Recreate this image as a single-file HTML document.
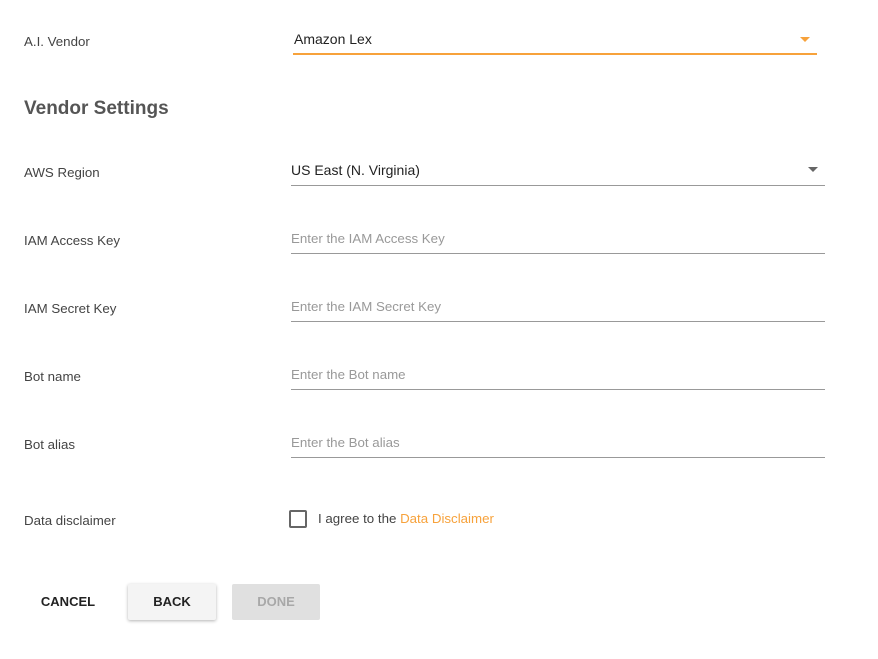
<!DOCTYPE html>
<html><head><meta charset="utf-8"><style>
body{margin:0;width:878px;height:659px;background:#fff;font-family:"Liberation Sans",sans-serif;position:relative;overflow:hidden}
.a{position:absolute;white-space:nowrap}
.lbl{font-size:13.3px;color:#444;line-height:16px}
.val{font-size:14px;color:#222;line-height:16px}
.ph{font-size:13.3px;color:#999;line-height:16px}
.ln{position:absolute;height:1px;background:#999}
.btn{position:absolute;height:36px;line-height:36px;text-align:center;font-size:13px;font-weight:bold;border-radius:2px}
</style></head><body>
<div class="a lbl" style="left:24px;top:34px">A.I. Vendor</div>
<div class="a val" style="left:294px;top:31px">Amazon Lex</div>
<div class="a" style="left:800px;top:37px;width:0;height:0;border-left:5px solid transparent;border-right:5px solid transparent;border-top:5px solid #f7a23b"></div>
<div class="ln" style="left:293px;top:53px;width:524px;height:2px;background:#f7a23b"></div>

<div class="a" style="left:24px;top:98px;font-size:19px;font-weight:bold;color:#555;line-height:22px">Vendor Settings</div>

<div class="a lbl" style="left:24px;top:165px">AWS Region</div>
<div class="a val" style="left:291px;top:162px">US East (N. Virginia)</div>
<div class="a" style="left:808px;top:167px;width:0;height:0;border-left:5px solid transparent;border-right:5px solid transparent;border-top:5px solid #666"></div>
<div class="ln" style="left:291px;top:185px;width:534px"></div>

<div class="a lbl" style="left:24px;top:233px">IAM Access Key</div>
<div class="a ph" style="left:291px;top:231px">Enter the IAM Access Key</div>
<div class="ln" style="left:291px;top:253px;width:534px"></div>

<div class="a lbl" style="left:24px;top:301px">IAM Secret Key</div>
<div class="a ph" style="left:291px;top:299px">Enter the IAM Secret Key</div>
<div class="ln" style="left:291px;top:321px;width:534px"></div>

<div class="a lbl" style="left:24px;top:369px">Bot name</div>
<div class="a ph" style="left:291px;top:367px">Enter the Bot name</div>
<div class="ln" style="left:291px;top:389px;width:534px"></div>

<div class="a lbl" style="left:24px;top:437px">Bot alias</div>
<div class="a ph" style="left:291px;top:435px">Enter the Bot alias</div>
<div class="ln" style="left:291px;top:457px;width:534px"></div>

<div class="a lbl" style="left:24px;top:513px">Data disclaimer</div>
<div class="a" style="left:289px;top:510px;width:14px;height:14px;border:2px solid #666;border-radius:2px"></div>
<div class="a lbl" style="left:318px;top:511px;color:#444">I agree to the <span style="color:#f7a23b">Data Disclaimer</span></div>

<div class="btn" style="left:28px;top:584px;width:80px;color:#222">CANCEL</div>
<div class="btn" style="left:128px;top:584px;width:88px;color:#222;background:#f4f4f4;box-shadow:0 1px 3px rgba(0,0,0,.3)">BACK</div>
<div class="btn" style="left:232px;top:584px;width:88px;color:#a8a8a8;background:#e0e0e0">DONE</div>
</body></html>
